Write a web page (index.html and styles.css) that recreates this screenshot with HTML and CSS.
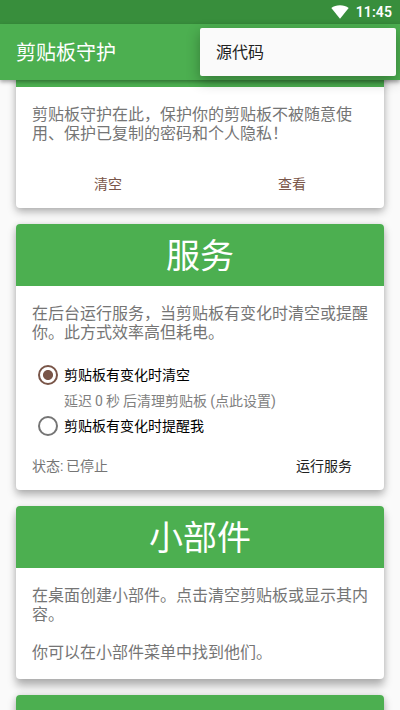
FILE: index.html
```html
<!DOCTYPE html>
<html lang="zh-CN">
<head>
<meta charset="utf-8">
<title>剪贴板守护</title>
<link rel="stylesheet" href="styles.css">
</head>
<body>
<div class="screen">
  <div class="status-bar">
    <svg class="wifi" width="18" height="14" viewBox="0 0 18 14"><path d="M9 13.8L0.3 3C2.6 1.2 5.6 0.2 9 0.2S15.4 1.2 17.7 3Z" fill="#fff"/></svg>
    <span class="clock">11:45</span>
  </div>
  <header class="app-bar">
    <h1>剪贴板守护</h1>
    <div class="menu">源代码</div>
  </header>
  <main class="content">
    <section class="card card-first">
      <h2></h2>
      <p>剪贴板守护在此，保护你的剪贴板不被随意使用、保护已复制的密码和个人隐私！</p>
      <div class="actions"><span>清空</span><span>查看</span></div>
    </section>
    <section class="card card-service">
      <h2>服务</h2>
      <p>在后台运行服务，当剪贴板有变化时清空或提醒你。此方式效率高但耗电。</p>
      <div class="options">
        <label class="option"><i class="radio checked"></i><span>剪贴板有变化时清空</span></label>
        <div class="hint">延迟 0 秒 后清理剪贴板 (点此设置)</div>
        <label class="option"><i class="radio"></i><span>剪贴板有变化时提醒我</span></label>
      </div>
      <div class="status"><span class="state">状态: 已停止</span><span class="run">运行服务</span></div>
    </section>
    <section class="card card-widget">
      <h2>小部件</h2>
      <p>在桌面创建小部件。点击清空剪贴板或显示其内容。<br><br>你可以在小部件菜单中找到他们。</p>
    </section>
    <section class="card card-last">
      <h2>作者</h2>
    </section>
  </main>
</div>
</body>
</html>
```

FILE: styles.css
```css
* { box-sizing: border-box; margin: 0; padding: 0; }
body {
  font-family: Roboto, "Noto Sans CJK SC", sans-serif;
  background: #fafafa;
}
.screen {
  width: 400px;
  height: 710px;
  overflow: hidden;
  display: flex;
  flex-direction: column;
}
.status-bar {
  height: 24px;
  background: #388e3c;
  display: flex;
  justify-content: flex-end;
  align-items: center;
  gap: 7px;
  padding-right: 8px;
  color: #fff;
}
.wifi { margin-top: -1px; }
.clock { font-size: 14px; font-weight: 600; line-height: 24px; letter-spacing: .1px; }
.app-bar {
  position: relative;
  z-index: 2;
  height: 56px;
  flex: none;
  background: #4caf50;
  padding-left: 16px;
  box-shadow: 0 2px 4px rgba(0, 0, 0, .35);
}
.app-bar h1 {
  width: 100px;
  color: #fff;
  font-size: 20px;
  font-weight: 400;
  line-height: 58px;
  height: 56px;
}
.menu {
  position: absolute;
  top: 4px;
  right: 4px;
  width: 196px;
  height: 48px;
  padding-left: 16px;
  border-radius: 2px;
  background: #fafafa;
  color: #212121;
  font-size: 16px;
  line-height: 50px;
  box-shadow: 0 5px 14px rgba(0, 0, 0, .3);
}
.content {
  flex: 1;
  min-height: 0;
  overflow: hidden;
  padding: 0 16px;
}
.card {
  position: relative;
  margin-bottom: 16px;
  border-radius: 4px;
  background: #fff;
  box-shadow: 0 4px 8px rgba(0, 0, 0, .27), 0 0 6px rgba(0, 0, 0, .1);
}
.card h2 {
  height: 62px;
  border-radius: 4px 4px 0 0;
  background: #4caf50;
  color: #fff;
  font-size: 34px;
  font-weight: 400;
  line-height: 64px;
  text-align: center;
}
.card p {
  padding: 18px 16px 0;
  color: #757575;
  font-size: 16px;
  line-height: 19px;
}
.card-first { height: 183px; margin-top: -55px; }
.card-service { height: 266px; box-shadow: 0 5px 8px rgba(0, 0, 0, .28), 0 0 6px rgba(0, 0, 0, .1); }
.card-widget { height: 173px; box-shadow: 0 7px 9px rgba(0, 0, 0, .28), 0 0 6px rgba(0, 0, 0, .1); }
.card-last { height: 173px; }
.actions {
  display: flex;
  padding-top: 29px;
  color: #795548;
  font-size: 14px;
  line-height: 24px;
  text-align: center;
}
.actions span { flex: 1; }
.options {
  padding: 20px 22px 0;
  color: #000;
  font-size: 14px;
}
.option {
  display: flex;
  align-items: center;
  gap: 6px;
  height: 26px;
}
.option span { padding-bottom: 2px; }
.radio {
  width: 20px;
  height: 20px;
  border: 2px solid #757575;
  border-radius: 50%;
}
.radio.checked {
  border-color: #795548;
  background: radial-gradient(circle, #795548 4.6px, transparent 5.4px);
}
.hint { padding-left: 26px; height: 25px; line-height: 27px; color: #808080; word-spacing: -.4px; }
.status {
  display: flex;
  justify-content: space-between;
  padding: 15px 32px 0 16px;
  color: #757575;
  font-size: 14px;
  line-height: 24px;
}
.state { word-spacing: -.8px; }
.run { color: #212121; }
```
